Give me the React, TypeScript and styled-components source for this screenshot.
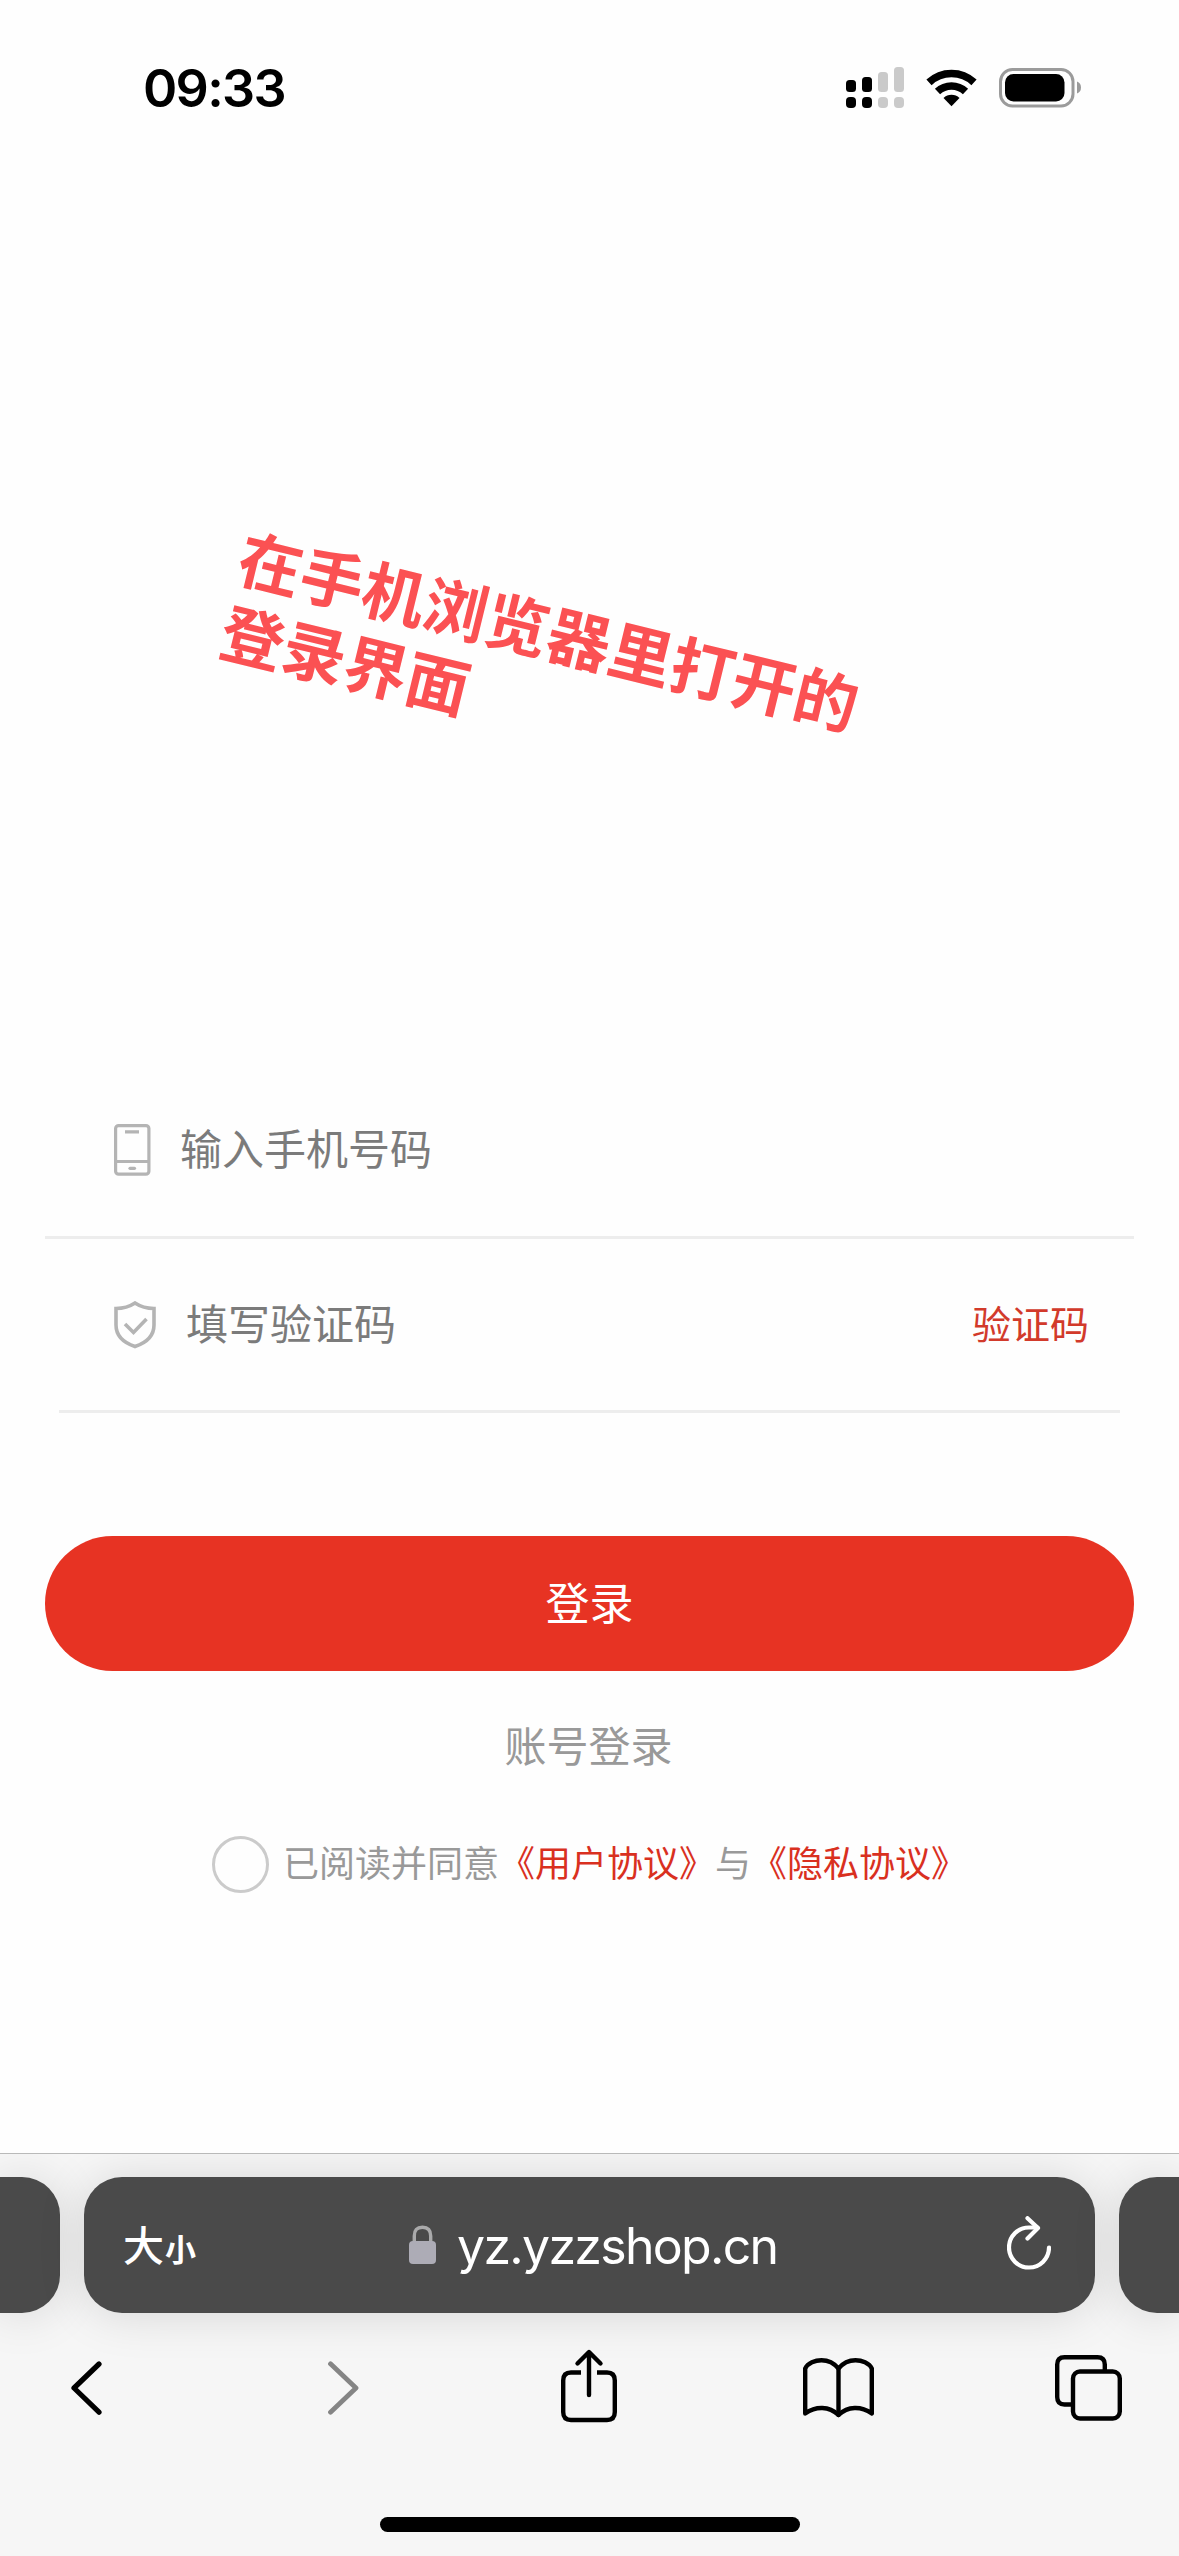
import React from "react";
import styled, { createGlobalStyle } from "styled-components";

const cjk = `"Noto Sans CJK SC", "Noto Sans", sans-serif`;
const latin = `Inter, "Noto Sans CJK SC", sans-serif`;

const GlobalStyle = createGlobalStyle`
  * { box-sizing: border-box; }
  body { margin: 0; background: #fefefe; font-family: ${cjk}; }
  svg { display: block; flex: none; }
`;

const Screen = styled.div`
  width: 1179px;
  height: 2556px;
  display: flex;
  flex-direction: column;
  overflow: hidden;
  background: #fefefe;
`;

const StatusBar = styled.header`
  height: 176px;
  padding: 0 98px 0 143px;
  display: flex;
  align-items: center;
  justify-content: space-between;
`;

const Clock = styled.time`
  padding-top: 2px;
  font: 600 52px/60px ${latin};
  letter-spacing: -1.7px;
  color: #000;
`;

const StatusIcons = styled.div`
  display: flex;
  align-items: center;
  gap: 22px;
`;

const Hero = styled.section`
  height: 887px;
  padding: 340px 0 0 250px;
`;

const Caption = styled.p`
  width: 640px;
  margin: 0;
  font-size: 63.5px;
  font-weight: 700;
  line-height: 76px;
  color: #fb5153;
  transform: rotate(13.73deg);
  transform-origin: 0 0;
`;

const LoginForm = styled.main`
  flex: 1;
  display: flex;
  flex-direction: column;
  align-items: center;
`;

const Field = styled.div<{ $width: number; $height: number; $inset: number; $gap: number }>`
  width: ${(p) => p.$width}px;
  height: ${(p) => p.$height}px;
  padding: 0 ${(p) => p.$inset - 24}px 0 ${(p) => p.$inset}px;
  display: flex;
  align-items: center;
  gap: ${(p) => p.$gap}px;
  border-bottom: 3px solid #ededed;
`;

const Placeholder = styled.span`
  flex: 1;
  padding-bottom: 6px;
  font-size: 42px;
  line-height: 60px;
  color: #7b7b7b;
`;

const CodeLink = styled.button`
  border: 0;
  padding: 0 0 5px;
  background: none;
  font: 400 39px/60px ${cjk};
  color: #d23a2b;
`;

const SubmitButton = styled.button`
  width: 1089px;
  height: 135px;
  margin-top: 123px;
  padding: 0 0 5px;
  border: 0;
  border-radius: 68px;
  background: #e73323;
  color: #fff;
  font: 400 44px/60px ${cjk};
`;

const AccountLink = styled.a`
  margin: 43px 2px 0 0;
  font-size: 42px;
  line-height: 60px;
  color: #999;
`;

const Agreement = styled.div`
  width: 755px;
  height: 57px;
  margin-top: 62px;
  display: flex;
  align-items: center;
  gap: 14px;
  font-size: 36px;
  line-height: 57px;
  color: #999;
  white-space: nowrap;
`;

const Radio = styled.span`
  width: 57px;
  height: 57px;
  flex: none;
  border: 3px solid #cbcbcb;
  border-radius: 50%;
`;

const AgreementText = styled.span`
  padding-bottom: 7px;
`;

const Policy = styled.a`
  color: #d9301f;
`;

const BrowserBar = styled.footer`
  height: 403px;
  display: flex;
  flex-direction: column;
  align-items: center;
  border-top: 1px solid #b9b9b9;
  background: #f6f6f6;
  overflow: hidden;
`;

const TabStrip = styled.div`
  width: 1179px;
  height: 136px;
  margin-top: 23px;
  display: flex;
  gap: 24px;
`;

const TabCard = styled.div<{ $side?: "left" | "right" }>`
  flex: ${(p) => (p.$side ? "0 0 60px" : "1")};
  height: 136px;
  padding: 0 ${(p) => (p.$side ? 0 : 44)}px 0 ${(p) => (p.$side ? 0 : 39)}px;
  display: flex;
  align-items: center;
  border-radius: ${(p) =>
    p.$side === "left" ? "0 38px 38px 0" : p.$side === "right" ? "38px 0 0 38px" : "38px"};
  background: #4a4a4a;
  box-shadow: 0 2px 48px rgba(0, 0, 0, 0.13);
  color: #fff;
`;

const TextSize = styled.span`
  display: flex;
  align-items: baseline;
  width: 286px;
  font: 500 41px/60px ${cjk};
`;

const SmallGlyph = styled.span`
  font-size: 31px;
  font-weight: 700;
  margin-left: 1px;
`;

const Address = styled.div`
  flex: 1;
  display: flex;
  align-items: center;
  gap: 21px;
  font: 400 50px/60px ${latin};
  letter-spacing: -1.7px;
`;

const Domain = styled.span`
  padding-top: 2px;
`;

const Toolbar = styled.nav`
  width: 1179px;
  height: 150px;
  padding: 0 55px 0 50px;
  display: flex;
  align-items: center;
  justify-content: space-between;
`;

const ToolButton = styled.button<{ $shift?: number }>`
  width: 72px;
  height: 84px;
  padding: 0;
  border: 0;
  background: none;
  display: flex;
  align-items: center;
  justify-content: center;

  svg {
    margin-left: ${(p) => (p.$shift ?? 0) * 2}px;
  }
`;

const HomeIndicator = styled.div`
  width: 420px;
  height: 15px;
  margin-top: 54px;
  border-radius: 8px;
  background: #000;
`;

const SignalIcon = () => (
  <svg width="58" height="42" viewBox="0 0 58 42">
    <g fill="#000">
      <rect x="0" y="13" width="10" height="12" rx="3.5" />
      <rect x="0" y="30" width="10" height="11" rx="4" />
      <rect x="16" y="10" width="10" height="15" rx="3.5" />
      <rect x="16" y="30" width="10" height="11" rx="4" />
    </g>
    <g fill="#cacaca">
      <rect x="32" y="5" width="10" height="20" rx="3.5" />
      <rect x="32" y="30" width="10" height="11" rx="4" />
      <rect x="48" y="0" width="10" height="25" rx="3.5" />
      <rect x="48" y="30" width="10" height="11" rx="4" />
    </g>
  </svg>
);

const WifiIcon = () => (
  <svg width="51" height="38" viewBox="0 0 51 38">
    <g fill="none" stroke="#000" strokeWidth="7.6">
      <path d="M3 13.4A33 33 0 0 1 48 13.4" />
      <path d="M11.5 22.5A20.5 20.5 0 0 1 39.5 22.5" />
    </g>
    <path d="M25.5 37.2L17.5 29A11.7 11.7 0 0 1 33.5 29Z" fill="#000" />
  </svg>
);

const BatteryIcon = () => (
  <svg width="82" height="40" viewBox="0 0 82 40">
    <rect x="1.5" y="1.5" width="72.5" height="36.5" rx="12" fill="none" stroke="#9b9b9b" strokeWidth="3" />
    <rect x="6" y="6" width="59.5" height="27.5" rx="8.5" fill="#000" />
    <path d="M78 13.5Q82 15 82 19.5T78 25.5Z" fill="#9b9b9b" />
  </svg>
);

const PhoneIcon = () => (
  <svg width="37" height="52" viewBox="0 0 37 52" fill="none" stroke="#b4b4b4" strokeWidth="3.2">
    <rect x="1.6" y="1.6" width="33.3" height="48.6" rx="3" />
    <path d="M2 37.5H35M11 7.8H25" />
    <path d="M16 44.3H20.5" strokeLinecap="round" />
  </svg>
);

const ShieldIcon = () => (
  <svg width="42" height="48" viewBox="0 0 42 48" fill="none" stroke="#b4b4b4" strokeWidth="3.6">
    <path d="M21 2C15 6 9 7.5 2 7.5V24C2 34 9 41.5 21 45.5C33 41.5 40 34 40 24V7.5C33 7.5 27 6 21 2Z" />
    <path d="M11 23L19.5 31.5L32.5 18" />
  </svg>
);

const LockIcon = () => (
  <svg width="27" height="40" viewBox="0 0 27 40">
    <path d="M5.3 18V11Q5.3 2.2 13.5 2.2T21.7 11V18" fill="none" stroke="#aaaaab" strokeWidth="3.4" />
    <rect x="0" y="16" width="27" height="23" rx="4" fill="#adacb6" />
  </svg>
);

const ReloadIcon = () => (
  <svg width="44" height="58" viewBox="0 0 44 58" fill="none" stroke="#fff" strokeWidth="4.2" strokeLinecap="round" strokeLinejoin="round">
    <path d="M42 31.5A20 20 0 1 1 22 11.500H30.500" />
    <path d="M20.5 2.2L31 12L20.5 22.5" />
  </svg>
);

const BackIcon = () => (
  <svg width="31" height="54" viewBox="0 0 31 54" fill="none" stroke="#000" strokeWidth="5.2" strokeLinecap="round" strokeLinejoin="round">
    <path d="M28 3L3 27L28 51.200" />
  </svg>
);

const ForwardIcon = () => (
  <svg width="31" height="54" viewBox="0 0 31 54" fill="none" stroke="#858585" strokeWidth="4.8" strokeLinecap="round" strokeLinejoin="round">
    <path d="M2.5 2.8L28 27L2.5 51.200" />
  </svg>
);

const ShareIcon = () => (
  <svg width="56" height="84" viewBox="0 0 56 84" fill="none" stroke="#000" strokeWidth="4.4" strokeLinecap="round" strokeLinejoin="round">
    <path d="M20 26.5H10Q2.2 26.5 2.2 34.5V66Q2.2 74 10 74H46Q53.8 74 53.8 66V34.5Q53.8 26.5 46 26.5H36" strokeLinecap="butt" />
    <path d="M28 49V6.5M16.500 17.5L28 6L39.500 17.5" />
  </svg>
);

const BookIcon = () => (
  <svg width="71" height="60" viewBox="0 0 71 60" fill="none" stroke="#000" strokeWidth="4.4" strokeLinejoin="round" strokeLinecap="round">
    <path d="M35.5 10.5C31 5 25 2.2 18.5 2.2C12 2.2 5 5 2.2 10.5V55.5C13 48 26 48 35.5 57C45 48 58 48 68.8 55.5V10.5C66 5 59 2.2 52.5 2.2C46 2.2 40 5 35.5 10.5Z" />
    <path d="M35.5 10.5V57" />
  </svg>
);

const TabsIcon = () => (
  <svg width="67" height="66" viewBox="0 0 67 66" fill="none" stroke="#000" strokeWidth="4.4">
    <path d="M49.8 15V9.5Q49.8 2.2 42.5 2.2H9.5Q2.2 2.2 2.2 9.5V42Q2.2 49.5 9.5 49.5H16" />
    <rect x="18" y="16.5" width="46.8" height="47" rx="7" />
  </svg>
);

export default function App() {
  return (
    <Screen>
      <GlobalStyle />
      <StatusBar>
        <Clock>09:33</Clock>
        <StatusIcons>
          <SignalIcon />
          <WifiIcon />
          <BatteryIcon />
        </StatusIcons>
      </StatusBar>
      <Hero>
        <Caption>
          在手机浏览器里打开的
          <br />
          登录界面
        </Caption>
      </Hero>
      <LoginForm>
        <Field $width={1089} $height={176} $inset={69} $gap={29}>
          <PhoneIcon />
          <Placeholder>输入手机号码</Placeholder>
        </Field>
        <Field $width={1061} $height={174} $inset={55} $gap={30}>
          <ShieldIcon />
          <Placeholder>填写验证码</Placeholder>
          <CodeLink>验证码</CodeLink>
        </Field>
        <SubmitButton>登录</SubmitButton>
        <AccountLink>账号登录</AccountLink>
        <Agreement>
          <Radio />
          <AgreementText>
            已阅读并同意<Policy>《用户协议》</Policy>与<Policy>《隐私协议》</Policy>
          </AgreementText>
        </Agreement>
      </LoginForm>
      <BrowserBar>
        <TabStrip>
          <TabCard $side="left" />
          <TabCard>
            <TextSize>
              大<SmallGlyph>小</SmallGlyph>
            </TextSize>
            <Address>
              <LockIcon />
              <Domain>yz.yzzshop.cn</Domain>
            </Address>
            <ReloadIcon />
          </TabCard>
          <TabCard $side="right" />
        </TabStrip>
        <Toolbar>
          <ToolButton>
            <BackIcon />
          </ToolButton>
          <ToolButton $shift={7}>
            <ForwardIcon />
          </ToolButton>
          <ToolButton $shift={1.5}>
            <ShareIcon />
          </ToolButton>
          <ToolButton $shift={1}>
            <BookIcon />
          </ToolButton>
          <ToolButton>
            <TabsIcon />
          </ToolButton>
        </Toolbar>
        <HomeIndicator />
      </BrowserBar>
    </Screen>
  );
}
